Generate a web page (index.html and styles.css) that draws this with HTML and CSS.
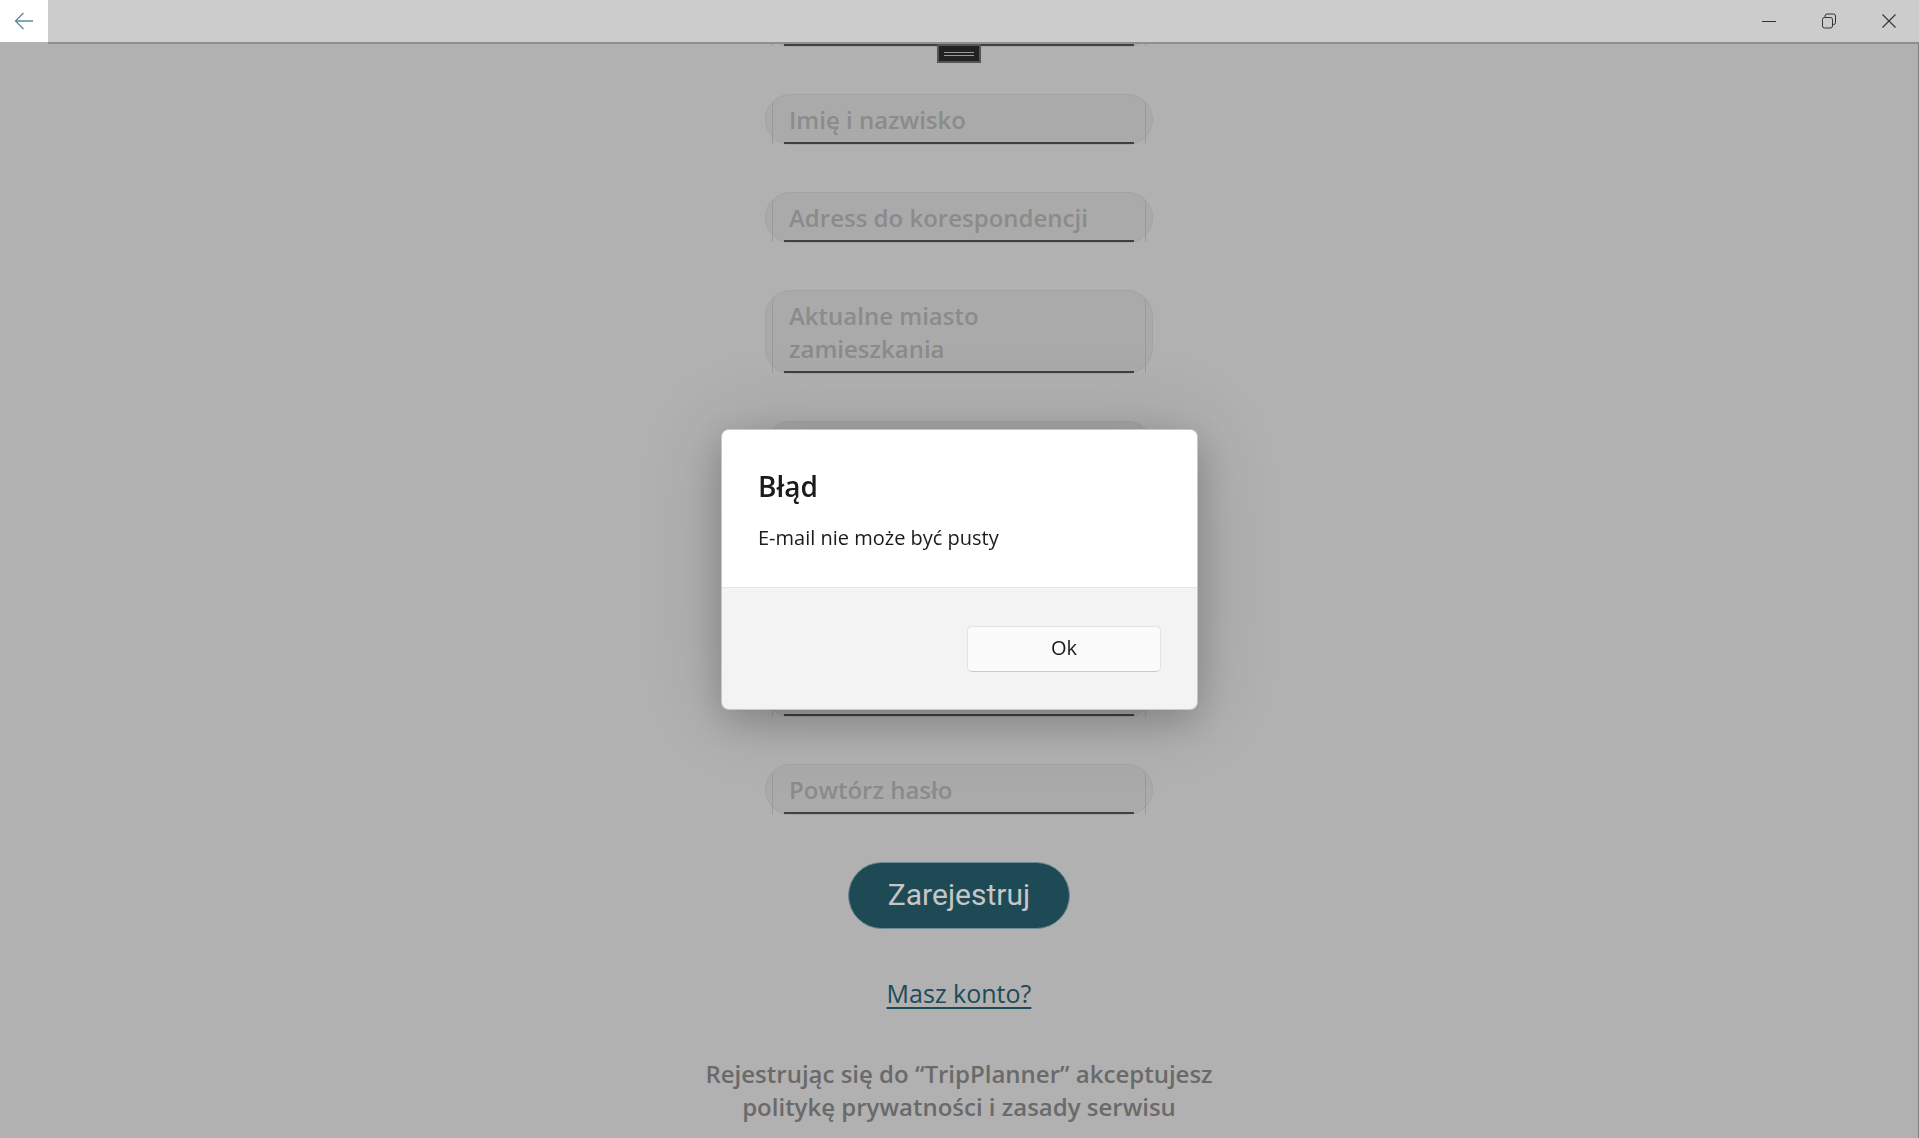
FILE: index.html
```html
<!DOCTYPE html>
<html lang="pl">
<head>
<meta charset="utf-8">
<title>TripPlanner – Rejestracja</title>
<link rel="stylesheet" href="styles.css">
</head>
<body>
<div class="window">
  <header class="titlebar">
    <button class="back-btn" aria-label="Wstecz">
      <svg width="20" height="18" viewBox="0 0 20 18" aria-hidden="true">
        <path d="M19 9 H1.5 M9.5 1 L1.5 9 L9.5 17" fill="none" stroke="#5a8d9b" stroke-width="1.3"/>
      </svg>
    </button>
    <div class="titlebar-drag">
      <div class="caption-buttons">
        <button class="caption-btn" aria-label="Minimalizuj">
          <svg width="14" height="14" viewBox="0 0 14 14" aria-hidden="true"><path d="M0 7.5 H14" stroke="#333" stroke-width="1"/></svg>
        </button>
        <button class="caption-btn" aria-label="Przywróć">
          <svg width="14" height="16" viewBox="0 0 14 16" aria-hidden="true">
            <rect x="0.5" y="4.5" width="10" height="10.5" rx="2" fill="none" stroke="#333" stroke-width="1"/>
            <path d="M3 4.5 V3 A2 2 0 0 1 5 1 H11.5 A2 2 0 0 1 13.5 3 V9.5 A2 2 0 0 1 11.5 11.5 H10.5" fill="none" stroke="#333" stroke-width="1"/>
          </svg>
        </button>
        <button class="caption-btn" aria-label="Zamknij">
          <svg width="14" height="14" viewBox="0 0 14 14" aria-hidden="true"><path d="M0.5 0.5 L13.5 13.5 M13.5 0.5 L0.5 13.5" stroke="#333" stroke-width="1.1"/></svg>
        </button>
      </div>
    </div>
  </header>

  <main class="content">
    <div class="grip"><span class="grip-lines"></span></div>
    <form class="form">
      <div class="field"><div class="field-input"><span class="placeholder">Nazwa użytkownika</span></div></div>
      <div class="field"><div class="field-input"><span class="placeholder">Imię i nazwisko</span></div></div>
      <div class="field"><div class="field-input"><span class="placeholder">Adress do korespondencji</span></div></div>
      <div class="field"><div class="field-input"><span class="placeholder">Aktualne miasto zamieszkania</span></div></div>
      <div class="field"><div class="field-input"><span class="placeholder">E-mail</span></div></div>
      <div class="field"><div class="field-input"><span class="placeholder">Numer telefonu</span></div></div>
      <div class="field field--spaced"><div class="field-input"><span class="placeholder">Hasło</span></div></div>
      <div class="field"><div class="field-input"><span class="placeholder">Powtórz hasło</span></div></div>
      <button type="button" class="primary-btn">Zarejestruj</button>
      <a class="link" href="#">Masz konto?</a>
      <p class="legal">Rejestrując się do “TripPlanner” akceptujesz politykę prywatności i zasady serwisu</p>
    </form>
  </main>
</div>

<div class="modal-layer">
  <div class="dialog" role="dialog" aria-labelledby="dlg-title">
    <div class="dialog-body">
      <h2 id="dlg-title" class="dialog-title">Błąd</h2>
      <p class="dialog-text">E-mail nie może być pusty</p>
    </div>
    <div class="dialog-footer">
      <button type="button" class="dialog-btn">Ok</button>
    </div>
  </div>
</div>
</body>
</html>
```
FILE: styles.css
```css
* { box-sizing: border-box; }

html, body {
  margin: 0;
  padding: 0;
  height: 100%;
  overflow: hidden;
}

body {
  font-family: "Open Sans", "Noto Sans", sans-serif;
  background: #b1b1b1;
}

.window {
  display: flex;
  flex-direction: column;
  height: 100vh;
}

/* ---------- title bar ---------- */
.titlebar {
  display: flex;
  align-items: flex-start;
  height: 44px;
  flex: none;
  background: #b1b1b1;
}

.back-btn {
  width: 48px;
  height: 42px;
  border: 0;
  padding: 0;
  background: #ffffff;
  display: flex;
  align-items: center;
  justify-content: center;
}

.titlebar-drag {
  flex: 1;
  height: 44px;
  background: #cccccc;
  border-bottom: 2px solid #8f8f8f;
  display: flex;
  justify-content: flex-end;
}

.caption-buttons {
  display: flex;
}

.caption-btn {
  width: 60px;
  height: 42px;
  border: 0;
  padding: 0;
  background: transparent;
  display: flex;
  align-items: center;
  justify-content: center;
}

/* ---------- content ---------- */
.content {
  position: relative;
  flex: 1;
  overflow: hidden;
  border-right: 1px solid #7f7f7f;
}

.grip {
  position: absolute;
  top: 0;
  left: 50%;
  transform: translateX(-50%);
  width: 44px;
  height: 19px;
  background: #222222;
  border: 2px solid #555555;
  display: flex;
  align-items: center;
  justify-content: center;
  z-index: 2;
}

.grip-lines {
  display: block;
  width: 30px;
  height: 4px;
  border-top: 1px solid #9a9a9a;
  border-bottom: 1px solid #9a9a9a;
}

.form {
  display: flex;
  flex-direction: column;
  align-items: center;
  gap: 47px;
  margin: -48px 0 0;
}

.field {
  width: 388px;
  border: 1px solid #a3a3a3;
  border-radius: 26px;
  background: #aaaaaa;
  padding: 7px 6px 0;
}

.field--spaced {
  margin-top: 49px;
}

.field-input {
  border-left: 1px solid #9a9a9a;
  border-right: 1px solid #9a9a9a;
  border-radius: 4px 4px 0 0;
  padding: 1px 40px 8px 16px;
  font-size: 24px;
  font-weight: 600;
  line-height: 33px;
  color: #8b8b8b;
  background-image: linear-gradient(#404040, #404040);
  background-size: calc(100% - 22px) 2px;
  background-position: center bottom;
  background-repeat: no-repeat;
}

.primary-btn {
  width: 222px;
  height: 67px;
  border: 1px solid #6f8c93;
  border-radius: 34px;
  background: #1e4a56;
  color: #c6c6c6;
  font-family: Roboto, "Noto Sans", sans-serif;
  font-size: 30px;
  font-weight: 400;
  padding: 0 0 2px;
}

.link {
  font-size: 25px;
  line-height: 34px;
  color: #1d4b57;
  text-decoration: underline;
  text-underline-offset: 4px;
  text-decoration-thickness: 1.5px;
}

.legal {
  margin: 0;
  width: 540px;
  text-align: center;
  font-size: 24px;
  font-weight: 600;
  line-height: 33px;
  color: #6a6a6a;
}

/* ---------- dialog ---------- */
.modal-layer {
  position: fixed;
  inset: 0;
  display: flex;
  align-items: center;
  justify-content: center;
  z-index: 10;
}

.dialog {
  width: 477px;
  height: 281px;
  border: 1px solid rgba(0, 0, 0, 0.18);
  border-radius: 8px;
  overflow: hidden;
  background: #f3f3f3;
  box-shadow: 0 12px 40px rgba(0, 0, 0, 0.22), 0 0 90px rgba(0, 0, 0, 0.12);
  display: flex;
  flex-direction: column;
  color: #1b1b1b;
}

.dialog-body {
  background: #ffffff;
  padding: 38px 36px 35px;
}

.dialog-title {
  margin: 0 0 20px;
  font-size: 28px;
  font-weight: 600;
  line-height: 36px;
}

.dialog-text {
  margin: 0;
  font-size: 20px;
  line-height: 28px;
}

.dialog-footer {
  flex: 1;
  border-top: 1px solid #e5e5e5;
  padding: 38px 36px 0;
  display: flex;
  justify-content: flex-end;
  align-items: flex-start;
}

.dialog-btn {
  width: 194px;
  height: 46px;
  background: #fbfbfb;
  border: 1px solid #e3e3e3;
  border-bottom-color: #cccccc;
  border-radius: 5px;
  font-family: "Open Sans", "Noto Sans", sans-serif;
  font-size: 20px;
  color: #1a1a1a;
  padding: 0 0 2px;
}
```
